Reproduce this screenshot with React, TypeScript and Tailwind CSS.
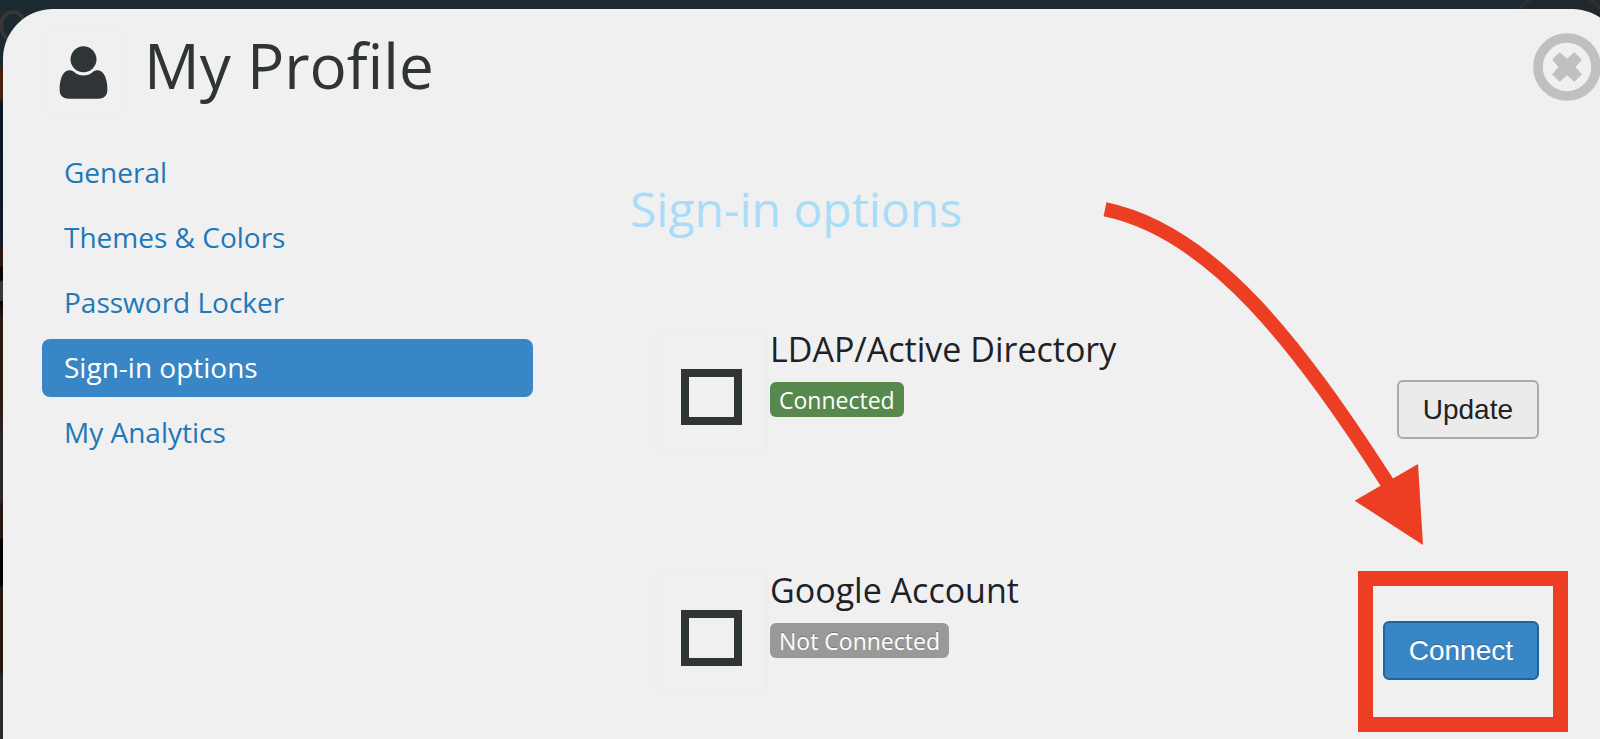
/**
 * App.tsx — My Profile dialog, sign-in options tab
 */
import React, { useState } from 'react';

const NAV_ITEMS = ['General', 'Themes & Colors', 'Password Locker', 'Sign-in options', 'My Analytics'];

const PROVIDERS = [
  { id: 'ldap', name: 'LDAP/Active Directory', connected: true },
  { id: 'google', name: 'Google Account', connected: false },
];

function UserIcon() {
  return (
    <svg viewBox="177 138 147 161" className="h-[53px] w-[49px]" fill="#2f3437" aria-hidden="true">
      <circle cx="250.5" cy="178.5" r="39.5" />
      <path d="M207 212C187 214 178 240 178 270C178 288 187 298 206 298H296C314 298 323 288 323 270C323 240 314 214 294 212C288 212 283 214 278 218C262 231 239 231 223 218C218 214 213 212 207 212Z" />
    </svg>
  );
}

function CloseIcon() {
  return (
    <svg viewBox="0 0 204 204" className="size-[68px]" aria-hidden="true">
      <circle cx="102" cy="102" r="87" fill="none" stroke="#c0c0c0" strokeWidth="29" />
      <path
        d="M80 59L102 79L124 59L145 80L126 102L145 124L124 145L102 125L80 145L59 124L78 102L59 80Z"
        fill="#c0c0c0"
        stroke="#c0c0c0"
        strokeWidth="3"
        strokeLinejoin="round"
      />
    </svg>
  );
}

/* Red frame round the button plus the arrow that leads to it */
function Callout() {
  return (
    <>
      <div className="pointer-events-none absolute -top-[50px] -right-[29px] -bottom-[52px] -left-[25px] border-[15px] border-[#eb3e23]" />
      <svg
        viewBox="70 66 963 1032"
        className="pointer-events-none absolute right-[115px] bottom-[134px] h-[344px] w-[321px] max-w-none"
        aria-hidden="true"
      >
        <path d="M76 88C400 155 660 500 925 912" fill="none" stroke="#eb3e23" strokeWidth="43" />
        <path d="M1015 852L825 962L1030 1095Z" fill="#eb3e23" />
      </svg>
    </>
  );
}

function ProviderRow({ id, name, connected }: { id: string; name: string; connected: boolean }) {
  return (
    <li className="flex items-start">
      <div className="flex h-[124px] w-[115px] shrink-0 items-center justify-center rounded-lg border-4 border-[#eeeeee] pt-3">
        <input
          id={id}
          type="checkbox"
          className="h-14 w-[61px] appearance-none border-8 border-[#2f3437] checked:bg-[#2f3437]"
        />
      </div>
      <div className="ml-px flex flex-1 flex-col items-start gap-[13px]">
        <label htmlFor={id} className="text-[34px] leading-10 text-[#1c2226]">
          {name}
        </label>
        <span
          className={`h-[35px] rounded-md px-[9px] text-[23px] leading-9 text-white ${connected ? 'bg-[#57884e]' : 'bg-[#999999] [text-shadow:0_-1px_0_#00000040]'}`}
        >
          {connected ? 'Connected' : 'Not Connected'}
        </span>
      </div>
      <div className="relative mt-[51px] font-['Liberation_Sans',Arial,sans-serif] text-[28px]">
        {connected ? (
          <button type="button" className="block h-[59px] rounded-md border-2 border-[#aaaaaa] bg-[#ebebeb] px-6 text-[#222222]">
            Update
          </button>
        ) : (
          <>
            <button type="button" className="block h-[59px] rounded-md border-2 border-[#1f659c] bg-[#3986c6] px-6 text-white [text-shadow:0_-1px_0_#00000040]">
              Connect
            </button>
            <Callout />
          </>
        )}
      </div>
    </li>
  );
}

export default function App() {
  const [active, setActive] = useState('Sign-in options');

  return (
    <div className="relative isolate flex min-h-screen flex-col overflow-hidden bg-[linear-gradient(#1b2930_66px,#47200e_68px,#47200e_98px,#0d1722_104px,#101a28_240px,#2c1712_250px,#2c1712_266px,#080404_268px,#080404_280px,#38373a_282px,#38373a_300px,#080404_302px,#2a1812_316px,#2a1812_400px,#2a2829_440px,#2a2829_500px,#24150f_506px,#24150f_538px,#000000_540px,#000000_585px,#24150f_587px,#24150f_670px,#2b2b2d_680px)] pt-[9px] pl-[3px] font-['Open_Sans','Noto_Sans',sans-serif]">
      {/* Dimmed page behind the dialog */}
      <div className="absolute inset-x-0 top-0 -z-10 h-16 bg-[#1b2930]" />
      <svg className="absolute top-0 left-0 -z-10 h-14 w-10" viewBox="0 0 40 56" fill="none" aria-hidden="true">
        <ellipse cx="13" cy="26" rx="12" ry="14" stroke="#383634" strokeWidth="4" />
      </svg>
      <svg className="absolute top-0 right-0 -z-10 h-16 w-[100px]" viewBox="0 0 100 64" aria-hidden="true">
        <circle cx="60" cy="43" r="53" fill="#20272d" stroke="#332f2f" strokeWidth="3" />
      </svg>

      <main className="-mr-[22px] flex-1 rounded-t-[50px] bg-[#f0f0f0] pt-[19px] pr-[83px] pb-4 pl-[39px]">
        <header className="relative flex items-start gap-5">
          <div className="flex h-[88px] w-[82px] items-center justify-center rounded-md border-2 border-[#eeeeee]">
            <UserIcon />
          </div>
          <h1 className="text-[62px] leading-[74px] text-[#2f3437]">My Profile</h1>
          <button type="button" aria-label="Close" className="absolute top-[5px] -right-[62px]">
            <CloseIcon />
          </button>
        </header>

        <div className="mt-7 flex items-start">
          <nav className="flex w-[491px] shrink-0 flex-col gap-[7px] text-[28px]">
            {NAV_ITEMS.map(item => (
              <a
                key={item}
                href="#"
                onClick={() => setActive(item)}
                className={`h-[58px] rounded-lg px-[22px] leading-[56px] ${item === active ? 'bg-[#3986c6] text-white' : 'text-[#2178b8]'}`}
              >
                {item}
              </a>
            ))}
          </nav>

          <section className="flex-1 pt-[34px] pl-[97px]">
            <h2 className="text-5xl leading-[62px] text-[#a9dcf8]">Sign-in options</h2>
            <ul className="mt-[89px] flex flex-col gap-[117px] pl-6">
              {PROVIDERS.map(p => (
                <ProviderRow key={p.id} {...p} />
              ))}
            </ul>
          </section>
        </div>
      </main>
    </div>
  );
}
